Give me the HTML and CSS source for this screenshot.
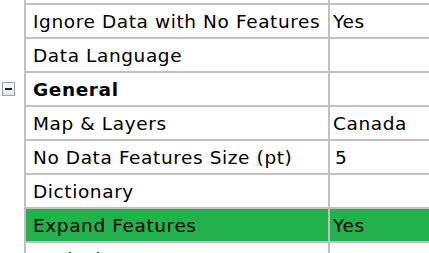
FILE: index.html
```html
<!DOCTYPE html>
<html lang="en">
<head>
    <meta charset="UTF-8">
    <title>Properties</title>
    <link rel="stylesheet" href="styles.css">
</head>
<body>

<div class="grid">
    <div class="gutter">
        <div class="gutter-cell first"></div>
        <div class="gutter-cell"></div>
        <div class="gutter-cell"></div>
        <div class="gutter-cell"><span class="toggle"></span></div>
    </div>

    <div class="rows">
        <div class="row first"><div class="label"></div><div class="value"></div></div>
        <div class="row"><div class="label">Ignore Data with No Features</div><div class="value">Yes</div></div>
        <div class="row"><div class="label">Data Language</div><div class="value"></div></div>
        <div class="row category"><div class="label">General</div><div class="value"></div></div>
        <div class="row"><div class="label">Map &amp; Layers</div><div class="value">Canada</div></div>
        <div class="row"><div class="label">No Data Features Size (pt)</div><div class="value num">5</div></div>
        <div class="row"><div class="label">Dictionary</div><div class="value"></div></div>
        <div class="row selected"><div class="label">Expand Features</div><div class="value">Yes</div></div>
        <div class="row"><div class="label">Exclusions</div><div class="value"></div></div>
    </div>
</div>

</body>
</html>
```

FILE: styles.css
```css
html, body {
    margin: 0;
    background: #fff;
    overflow: hidden;
}

body {
    font-family: "DejaVu Sans", sans-serif;
    font-size: 18.5px;
    letter-spacing: 0.6px;
    color: #000;
}

.grid {
    display: flex;
    height: 253px;
}

.gutter {
    width: 24px;
    flex: none;
}

.gutter-cell {
    height: 34px;
    display: flex;
    align-items: center;
}

.gutter-cell.first {
    height: 5px;
}

/* the little [-] box next to a category */
.toggle {
    width: 11px;
    height: 12px;
    margin: -2px 0 0 2px;
    border: 1px solid #9c9ccc;
    background: linear-gradient(#fbfbfb, #e4e4ec);
    position: relative;
}

.toggle::after {
    content: "";
    position: absolute;
    left: 2px;
    right: 2px;
    top: 5px;
    height: 2px;
    background: #222;
}

.rows {
    flex: 1;
    border-left: 2px solid #c0c0c0;
}

.row {
    display: flex;
    height: 32px;
    border-bottom: 2px solid #c0c0c0;
}

.row.first {
    height: 3px;
}

.label {
    width: 295px;
    padding-left: 7px;
    border-right: 2px solid #c0c0c0;
    display: flex;
    align-items: center;
    white-space: nowrap;
}

.value {
    flex: 1;
    padding-left: 3px;
    display: flex;
    align-items: center;
    white-space: nowrap;
}

.value.num {
    padding-left: 5px;
}

.category .label {
    font-weight: bold;
}

.selected {
    background: #22b14c;
}
```
